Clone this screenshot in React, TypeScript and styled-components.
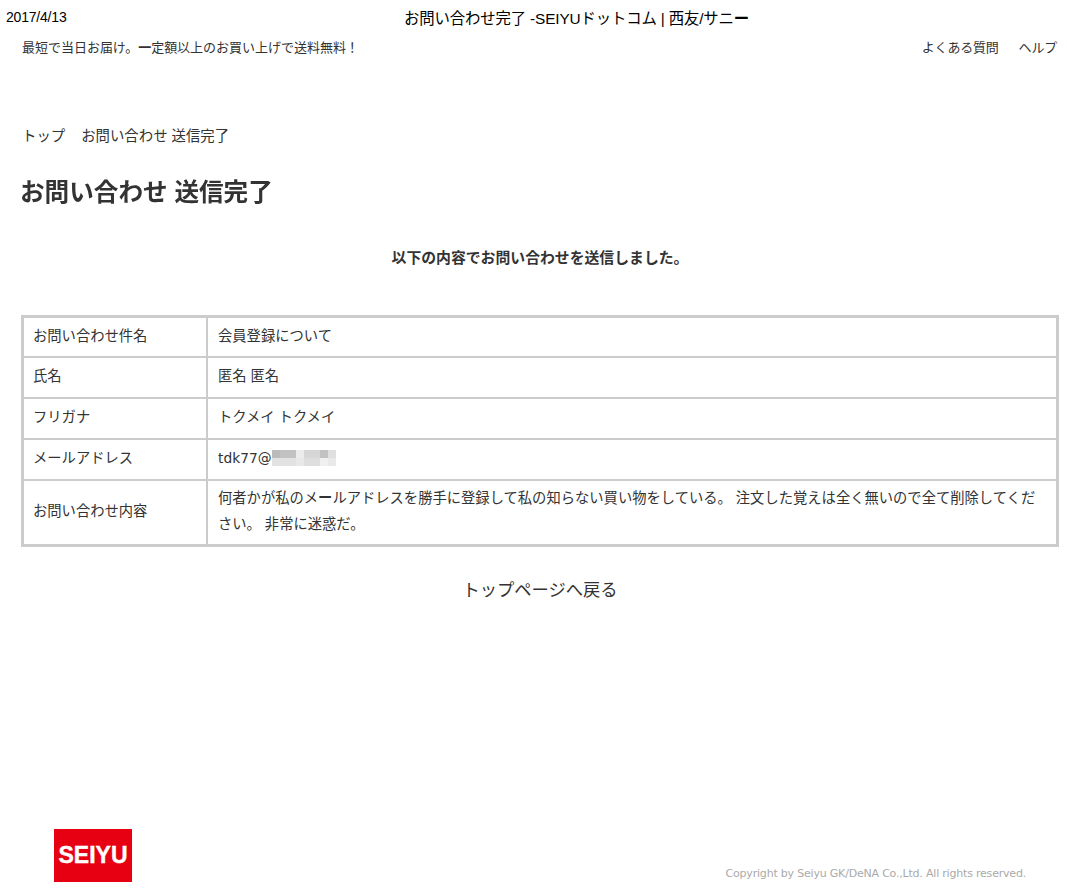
import React from "react";
import styled, { createGlobalStyle } from "styled-components";

const Global = createGlobalStyle`
  html, body { margin: 0; padding: 0; background: #fff; }
  body { font-family: "Liberation Sans", "Noto Sans CJK JP", sans-serif; color: #333; }
`;

const Page = styled.div`
  width: 1067px;
  height: 893px;
  display: flex;
  flex-direction: column;
  overflow: hidden;
`;

const PrintHeader = styled.header`
  display: flex;
  padding: 8px 0 0 6px;
  height: 38px;
  box-sizing: border-box;
  color: #000;
  line-height: 18px;
`;

const DateText = styled.div`
  width: 398px;
  font-size: 14px;
  letter-spacing: -0.2px;
`;

const PrintTitle = styled.div`
  font-size: 15.4px;
  letter-spacing: -0.15px;
  padding-top: 2px;
`;

const Heavy = styled.b`
  font-weight: 700;
`;

const TopBar = styled.div`
  display: flex;
  justify-content: space-between;
  padding: 0 10px 0 22px;
  height: 20px;
  font-size: 13px;
  letter-spacing: -0.02px;
  line-height: 20px;
  color: #333;
`;

const TopLinks = styled.nav`
  display: flex;
  gap: 20px;
  letter-spacing: -0.2px;
`;

const Content = styled.main`
  padding: 0 8px 0 21px;
  display: flex;
  flex-direction: column;
`;

const Crumbs = styled.div`
  display: flex;
  gap: 16px;
  margin-top: 68px;
  padding-left: 1px;
  font-size: 14.4px;
  line-height: 20px;
  color: #333;
`;

const Heading = styled.h1`
  margin: 31px 0 0 -1px;
  font-size: 24.6px;
  line-height: 32px;
  font-weight: 700;
  color: #333;
  filter: blur(0.4px);
`;

const Notice = styled.p`
  margin: 39px 0 0;
  text-align: center;
  font-size: 14.85px;
  line-height: 20px;
  font-weight: 700;
  color: #333;
`;

const InfoTable = styled.table`
  margin-top: 47px;
  width: 1038px;
  border-collapse: collapse;
  border: 3px solid #ccc;
  font-size: 14.3px;
  line-height: 26px;
  color: #333;
`;

const Row = styled.tr<{ $h: number }>`
  height: ${(p) => p.$h}px;
`;

const LabelCell = styled.th`
  width: 173px;
  padding: 0 0 2px 9px;
  border: 2px solid #ccc;
  text-align: left;
  font-weight: 400;
`;

const ValueCell = styled.td`
  padding: 0 10px 2px;
  border: 2px solid #ccc;
`;

const Mail = styled.span`
  display: inline-flex;
  align-items: center;
  font-family: "DejaVu Sans", sans-serif;
  font-size: 13.8px;
`;

const Mosaic = styled.svg`
  display: block;
  width: 64px;
  height: 16px;
`;

const BackLink = styled.a`
  margin-top: 31px;
  text-align: center;
  font-size: 17.3px;
  line-height: 24px;
  color: #333;
`;

const Footer = styled.footer`
  margin-top: auto;
  display: flex;
  justify-content: space-between;
  align-items: flex-end;
  padding: 0 41px 11px 54px;
`;

const Logo = styled.div`
  width: 78px;
  height: 53px;
  background: #e60012;
  color: #fff;
  display: flex;
  align-items: center;
  justify-content: center;
  font-size: 23px;
  font-weight: 700;
  -webkit-text-stroke: 0.4px #fff;
`;

const Copy = styled.small`
  font-family: "DejaVu Sans", sans-serif;
  font-size: 11px;
  line-height: 14px;
  color: #aaa;
  letter-spacing: -0.2px;
  margin-bottom: 1px;
`;

const cells: [number, number, number, string][] = [
  [0, 0, 8, "#bbbbbb"], [8, 0, 16, "#c2c2c2"], [24, 0, 8, "#ececec"], [32, 0, 16, "#d6d6d6"],
  [48, 0, 8, "#c2c2c2"], [56, 0, 8, "#e0e0e0"],
  [0, 8, 24, "#e2e2e2"], [24, 8, 8, "#e8e8e8"], [32, 8, 16, "#dedede"], [48, 8, 8, "#f0f0f0"], [56, 8, 8, "#e9e9e9"],
];

export default function App() {
  return (
    <Page>
      <Global />
      <PrintHeader>
        <DateText>2017/4/13</DateText>
        <PrintTitle>お問い合わせ完了 -SEIYUドットコム | 西友/サニ<Heavy>ー</Heavy></PrintTitle>
      </PrintHeader>
      <TopBar>
        <span>最短で当日お届け。<Heavy>一</Heavy>定額以上のお買い上げで送料無料！</span>
        <TopLinks>
          <span>よくある質問</span>
          <span>ヘルプ</span>
        </TopLinks>
      </TopBar>
      <Content>
        <Crumbs>
          <span>トップ</span>
          <span>お問い合わせ 送信完了</span>
        </Crumbs>
        <Heading>お問い合わせ 送信完了</Heading>
        <Notice>以下の内容でお問い合わせを送信しました。</Notice>
        <InfoTable>
          <tbody>
            <Row $h={40}>
              <LabelCell>お問い合わせ件名</LabelCell>
              <ValueCell>会員登録について</ValueCell>
            </Row>
            <Row $h={41}>
              <LabelCell>氏名</LabelCell>
              <ValueCell>匿名 匿名</ValueCell>
            </Row>
            <Row $h={41}>
              <LabelCell>フリガナ</LabelCell>
              <ValueCell>トクメイ トクメイ</ValueCell>
            </Row>
            <Row $h={41}>
              <LabelCell>メールアドレス</LabelCell>
              <ValueCell>
                <Mail>
                  tdk77@
                  <Mosaic viewBox="0 0 64 16" aria-hidden="true">
                    {cells.map(([x, y, w, c], i) => (
                      <rect key={i} x={x} y={y} width={w} height={8} fill={c} />
                    ))}
                  </Mosaic>
                </Mail>
              </ValueCell>
            </Row>
            <Row $h={66}>
              <LabelCell>お問い合わせ内容</LabelCell>
              <ValueCell>
                何者かが私のメ<Heavy>ー</Heavy>ルアドレスを勝手に登録して私の知らない買い物をしている。 注文した覚えは全く無いので全て削除してくだ
                <br />
                さい。 非常に迷惑だ。
              </ValueCell>
            </Row>
          </tbody>
        </InfoTable>
        <BackLink>トップページへ戻る</BackLink>
      </Content>
      <Footer>
        <Logo>SEIYU</Logo>
        <Copy>Copyright by Seiyu GK/DeNA Co.,Ltd. All rights reserved.</Copy>
      </Footer>
    </Page>
  );
}
